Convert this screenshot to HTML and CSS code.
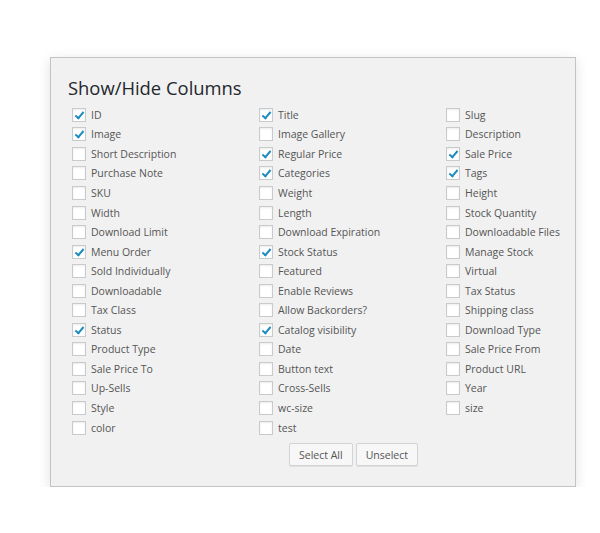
FILE: index.html
```html
<!DOCTYPE html>
<html lang="en">
<head>
    <meta charset="UTF-8">
    <title>Show/Hide Columns</title>
    <link rel="stylesheet" href="styles.css">
</head>
<body>
    <div class="columns-panel">
        <h2>Show/Hide Columns</h2>
        <div class="columns-grid">
            <label class="col-item"><input type="checkbox" checked> ID</label>
            <label class="col-item"><input type="checkbox" checked> Title</label>
            <label class="col-item"><input type="checkbox"> Slug</label>
            <label class="col-item"><input type="checkbox" checked> Image</label>
            <label class="col-item"><input type="checkbox"> Image Gallery</label>
            <label class="col-item"><input type="checkbox"> Description</label>
            <label class="col-item"><input type="checkbox"> Short Description</label>
            <label class="col-item"><input type="checkbox" checked> Regular Price</label>
            <label class="col-item"><input type="checkbox" checked> Sale Price</label>
            <label class="col-item"><input type="checkbox"> Purchase Note</label>
            <label class="col-item"><input type="checkbox" checked> Categories</label>
            <label class="col-item"><input type="checkbox" checked> Tags</label>
            <label class="col-item"><input type="checkbox"> SKU</label>
            <label class="col-item"><input type="checkbox"> Weight</label>
            <label class="col-item"><input type="checkbox"> Height</label>
            <label class="col-item"><input type="checkbox"> Width</label>
            <label class="col-item"><input type="checkbox"> Length</label>
            <label class="col-item"><input type="checkbox"> Stock Quantity</label>
            <label class="col-item"><input type="checkbox"> Download Limit</label>
            <label class="col-item"><input type="checkbox"> Download Expiration</label>
            <label class="col-item"><input type="checkbox"> Downloadable Files</label>
            <label class="col-item"><input type="checkbox" checked> Menu Order</label>
            <label class="col-item"><input type="checkbox" checked> Stock Status</label>
            <label class="col-item"><input type="checkbox"> Manage Stock</label>
            <label class="col-item"><input type="checkbox"> Sold Individually</label>
            <label class="col-item"><input type="checkbox"> Featured</label>
            <label class="col-item"><input type="checkbox"> Virtual</label>
            <label class="col-item"><input type="checkbox"> Downloadable</label>
            <label class="col-item"><input type="checkbox"> Enable Reviews</label>
            <label class="col-item"><input type="checkbox"> Tax Status</label>
            <label class="col-item"><input type="checkbox"> Tax Class</label>
            <label class="col-item"><input type="checkbox"> Allow Backorders?</label>
            <label class="col-item"><input type="checkbox"> Shipping class</label>
            <label class="col-item"><input type="checkbox" checked> Status</label>
            <label class="col-item"><input type="checkbox" checked> Catalog visibility</label>
            <label class="col-item"><input type="checkbox"> Download Type</label>
            <label class="col-item"><input type="checkbox"> Product Type</label>
            <label class="col-item"><input type="checkbox"> Date</label>
            <label class="col-item"><input type="checkbox"> Sale Price From</label>
            <label class="col-item"><input type="checkbox"> Sale Price To</label>
            <label class="col-item"><input type="checkbox"> Button text</label>
            <label class="col-item"><input type="checkbox"> Product URL</label>
            <label class="col-item"><input type="checkbox"> Up-Sells</label>
            <label class="col-item"><input type="checkbox"> Cross-Sells</label>
            <label class="col-item"><input type="checkbox"> Year</label>
            <label class="col-item"><input type="checkbox"> Style</label>
            <label class="col-item"><input type="checkbox"> wc-size</label>
            <label class="col-item"><input type="checkbox"> size</label>
            <label class="col-item"><input type="checkbox"> color</label>
            <label class="col-item"><input type="checkbox"> test</label>
        </div>
        <div class="panel-actions">
            <button type="button" id="selectAll">Select All</button>
            <button type="button" id="unselect">Unselect</button>
        </div>
    </div>

    <script>
        // Tout cocher / tout décocher
        document.getElementById('selectAll').addEventListener('click', function() {
            document.querySelectorAll('.columns-grid input').forEach(function(cb) { cb.checked = true; });
        });
        document.getElementById('unselect').addEventListener('click', function() {
            document.querySelectorAll('.columns-grid input').forEach(function(cb) { cb.checked = false; });
        });
    </script>
</body>
</html>
```

FILE: styles.css
```css
body {
    margin: 0;
    background-color: #fff;
    font-family: "Open Sans", Arial, sans-serif;
}
.columns-panel {
    box-sizing: border-box;
    width: 526px;
    height: 430px;
    margin: 57px 0 0 50px;
    padding: 17px 0 0 17px;
    background-color: #f1f1f1;
    border: 1px solid #c3c3c3;
    box-shadow: 0 3px 12px rgba(0, 0, 0, 0.12);
}
h2 {
    margin: 0 0 4px 0;
    font-size: 18.4px;
    font-weight: 400;
    line-height: 26px;
    color: #23282d;
}
.columns-grid {
    display: grid;
    grid-template-columns: 187px 187px 130px;
    grid-auto-rows: 19.56px;
}
.col-item {
    display: flex;
    align-items: center;
    font-size: 10.5px;
    color: #555;
    white-space: nowrap;
}
.col-item input {
    appearance: none;
    -webkit-appearance: none;
    box-sizing: border-box;
    width: 14px;
    height: 14px;
    margin: 0 5px 0 4px;
    background-color: #fff;
    border: 1px solid #c8cbce;
    box-shadow: inset 0 1px 2px rgba(0, 0, 0, 0.08);
    position: relative;
}
.col-item input:checked::after {
    content: "";
    position: absolute;
    left: 4px;
    top: 1px;
    width: 3px;
    height: 7px;
    border: solid #1e8cbe;
    border-width: 0 2px 2px 0;
    transform: rotate(40deg);
}
.panel-actions {
    display: flex;
    gap: 3px;
    margin: 6px 0 0 221px;
}
.panel-actions button {
    height: 23px;
    padding: 0 9px;
    background-color: #f7f7f7;
    border: 1px solid #d3d3d3;
    border-radius: 2px;
    box-shadow: 0 1px 0 #e0e0e0;
    font-family: "Open Sans", Arial, sans-serif;
    font-size: 10.5px;
    color: #555;
    cursor: pointer;
}
```
